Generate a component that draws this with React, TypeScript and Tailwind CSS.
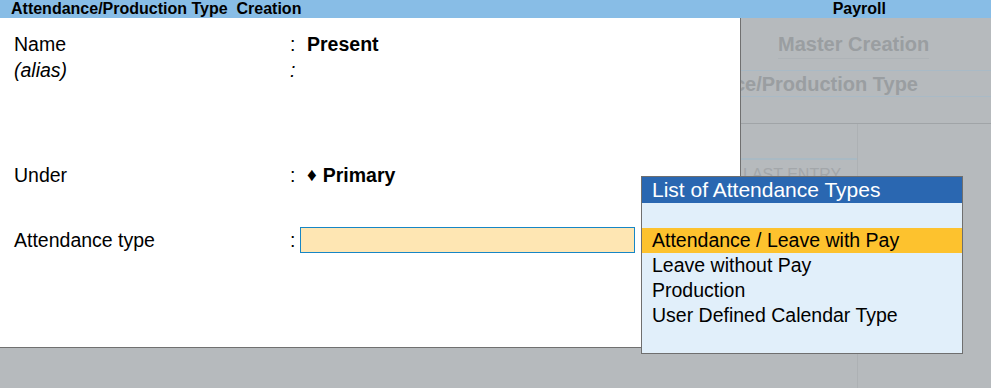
import React from "react";

const font = { fontFamily: '"Liberation Sans", Arial, sans-serif' };

const rows = [
  "Attendance / Leave with Pay",
  "Leave without Pay",
  "Production",
  "User Defined Calendar Type",
];

function FormRow({ label, italic, children }: { label: string; italic?: boolean; children?: React.ReactNode }) {
  return (
    <div className="flex h-[26px] items-center leading-[26px]">
      <div className={`w-[290px] shrink-0 pl-[14px] ${italic ? "italic" : ""}`}>{label}</div>
      <div className={`w-[10px] shrink-0 ${italic ? "italic" : ""}`}>:</div>
      <div className="flex-1">{children}</div>
    </div>
  );
}

export default function App() {
  return (
    <div className="relative w-[991px] h-[388px] overflow-hidden bg-[#b6babd] text-black" style={font}>
      {/* title bar */}
      <div className="flex h-[18px] items-center bg-[#88bde6] text-[16px] font-bold leading-[18px]">
        <div className="w-[741px] shrink-0 pl-[11px] whitespace-pre">Attendance/Production Type  Creation</div>
        <div className="flex-1 text-right pr-[105px]">Payroll</div>
      </div>

      <div className="flex h-[370px]">
        {/* left: form panel */}
        <div className="w-[741px] shrink-0 flex flex-col">
          <div className="h-[330px] bg-white border-r border-b border-[#707070] pt-[13px] text-[19.5px]">
            <FormRow label="Name">
              <span className="pl-[7px] font-bold">Present</span>
            </FormRow>
            <FormRow label="(alias)" italic />
            <div className="h-[79px]" />
            <FormRow label="Under">
              <span className="pl-[7px] font-bold">
                <span className="text-[19px] align-[1px]">♦</span>
                <span className="pl-[6px]">Primary</span>
              </span>
            </FormRow>
            <div className="h-[39px]" />
            <FormRow label="Attendance type">
              <div className="w-[335px] h-[26px] bg-[#fee6b3] border border-[#1786c5]" />
            </FormRow>
          </div>
        </div>

        {/* right: background master screen */}
        <div className="flex-1 min-w-0 overflow-hidden flex flex-col text-[#9a9ea1] font-bold text-[20px]">
          <div className="h-[53px] border-b border-[#a9bac6] pl-[37px] pt-[14px] leading-[24px]">
            <span className="inline-block border-b border-[#aeb3b7] pb-[2px]">Master Creation</span>
          </div>
          <div className="h-[26px] border-b border-[#a9bac6] overflow-hidden flex justify-end pr-[73px] leading-[26px]">
            <span className="shrink-0 whitespace-nowrap">Attendance/Production Type</span>
          </div>
          <div className="h-[27px] border-b border-[#a0a4a7]" />
          <div className="flex-1 flex">
            <div className="w-[117px] border-r border-[#adb1b4] flex flex-col">
              <div className="h-[36px] border-b-2 border-[#a9bac4]" />
              <div className="pl-[2px] pt-[6px] text-[16px] font-normal leading-[18px] text-[#a3a7aa]">LAST ENTRY</div>
            </div>
            <div className="flex-1" />
          </div>
        </div>
      </div>

      {/* popup list */}
      <div className="absolute left-[641px] top-[176px] w-[322px] h-[178px] border border-[#6f6f6f] bg-[#e1effa] flex flex-col">
        <div className="h-[26px] bg-[#2a67b1] text-white text-[21px] leading-[26px] pl-[10px]">
          List of Attendance Types
        </div>
        <div className="h-[25px]" />
        {rows.map((r, i) => (
          <div
            key={r}
            className={`h-[25px] leading-[25px] text-[19.5px] pl-[10px] ${i === 0 ? "bg-[#fdc22e]" : ""}`}
          >
            {r}
          </div>
        ))}
      </div>
    </div>
  );
}
